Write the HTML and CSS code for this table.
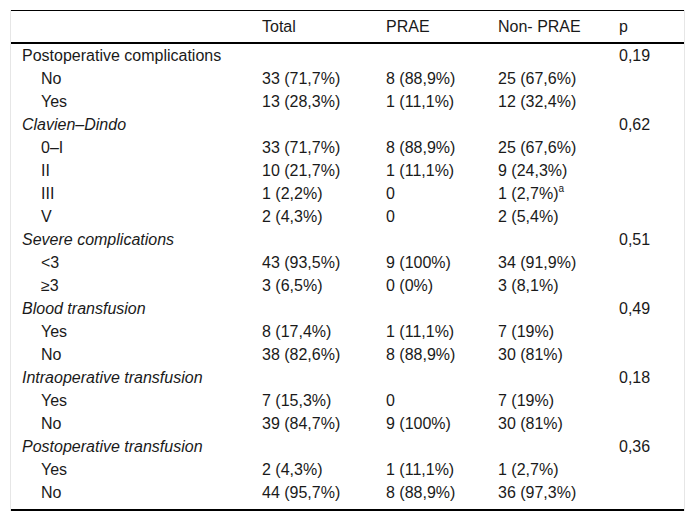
FILE: index.html
```html
<!DOCTYPE html>
<html>
<head>
<meta charset="utf-8">
<link rel="stylesheet" href="styles.css">
</head>
<body>
<div class="wrap">
<table class="tbl">
<colgroup>
<col class="c1"><col class="c2"><col class="c3"><col class="c4"><col class="c5">
</colgroup>
<thead>
<tr><th></th><th>Total</th><th>PRAE</th><th>Non- PRAE</th><th>p</th></tr>
</thead>
<tbody>
<tr><td>Postoperative complications</td><td></td><td></td><td></td><td>0,19</td></tr>
<tr><td class="ind">No</td><td>33 (71,7%)</td><td>8 (88,9%)</td><td>25 (67,6%)</td><td></td></tr>
<tr><td class="ind">Yes</td><td>13 (28,3%)</td><td>1 (11,1%)</td><td>12 (32,4%)</td><td></td></tr>
<tr><td class="it">Clavien–Dindo</td><td></td><td></td><td></td><td>0,62</td></tr>
<tr><td class="ind">0–I</td><td>33 (71,7%)</td><td>8 (88,9%)</td><td>25 (67,6%)</td><td></td></tr>
<tr><td class="ind">II</td><td>10 (21,7%)</td><td>1 (11,1%)</td><td>9 (24,3%)</td><td></td></tr>
<tr><td class="ind">III</td><td>1 (2,2%)</td><td>0</td><td>1 (2,7%)<sup>a</sup></td><td></td></tr>
<tr><td class="ind">V</td><td>2 (4,3%)</td><td>0</td><td>2 (5,4%)</td><td></td></tr>
<tr><td class="it">Severe complications</td><td></td><td></td><td></td><td>0,51</td></tr>
<tr><td class="ind">&lt;3</td><td>43 (93,5%)</td><td>9 (100%)</td><td>34 (91,9%)</td><td></td></tr>
<tr><td class="ind">≥3</td><td>3 (6,5%)</td><td>0 (0%)</td><td>3 (8,1%)</td><td></td></tr>
<tr><td class="it">Blood transfusion</td><td></td><td></td><td></td><td>0,49</td></tr>
<tr><td class="ind">Yes</td><td>8 (17,4%)</td><td>1 (11,1%)</td><td>7 (19%)</td><td></td></tr>
<tr><td class="ind">No</td><td>38 (82,6%)</td><td>8 (88,9%)</td><td>30 (81%)</td><td></td></tr>
<tr><td class="it">Intraoperative transfusion</td><td></td><td></td><td></td><td>0,18</td></tr>
<tr><td class="ind">Yes</td><td>7 (15,3%)</td><td>0</td><td>7 (19%)</td><td></td></tr>
<tr><td class="ind">No</td><td>39 (84,7%)</td><td>9 (100%)</td><td>30 (81%)</td><td></td></tr>
<tr><td class="it">Postoperative transfusion</td><td></td><td></td><td></td><td>0,36</td></tr>
<tr><td class="ind">Yes</td><td>2 (4,3%)</td><td>1 (11,1%)</td><td>1 (2,7%)</td><td></td></tr>
<tr class="last"><td class="ind">No</td><td>44 (95,7%)</td><td>8 (88,9%)</td><td>36 (97,3%)</td><td></td></tr>
</tbody>
</table>
</div>
</body>
</html>
```

FILE: styles.css
```css
html, body {
  margin: 0;
  padding: 0;
  background: #ffffff;
}
body {
  font-family: "Liberation Sans", Arial, sans-serif;
  font-size: 16px;
  color: #1a1a1a;
}
.wrap {
  margin: 10px 0 0 10px;
  width: 673px;
  border-left: 1px solid #e6e6e6;
  border-right: 1px solid #e6e6e6;
}
.tbl {
  width: 673px;
  border-collapse: collapse;
  table-layout: fixed;
  border-top: 1px solid #000;
  border-bottom: 2px solid #000;
}
.c1 { width: 240px; }
.c2 { width: 124px; }
.c3 { width: 112px; }
.c4 { width: 121px; }
.c5 { width: 76px; }
.tbl th {
  font-weight: normal;
  text-align: left;
  height: 31px;
  padding: 0 0 0 11px;
  border-bottom: 2px solid #000;
  vertical-align: middle;
}
.tbl td {
  padding: 0 0 0 11px;
  line-height: 23px;
  vertical-align: middle;
  white-space: nowrap;
}
.tbl td.ind {
  padding-left: 30px;
}
.tbl td.it {
  font-style: italic;
}
.tbl tr.last td {
  padding-bottom: 5px;
}
sup {
  font-size: 10px;
  line-height: 0;
  vertical-align: 7px;
}
```
